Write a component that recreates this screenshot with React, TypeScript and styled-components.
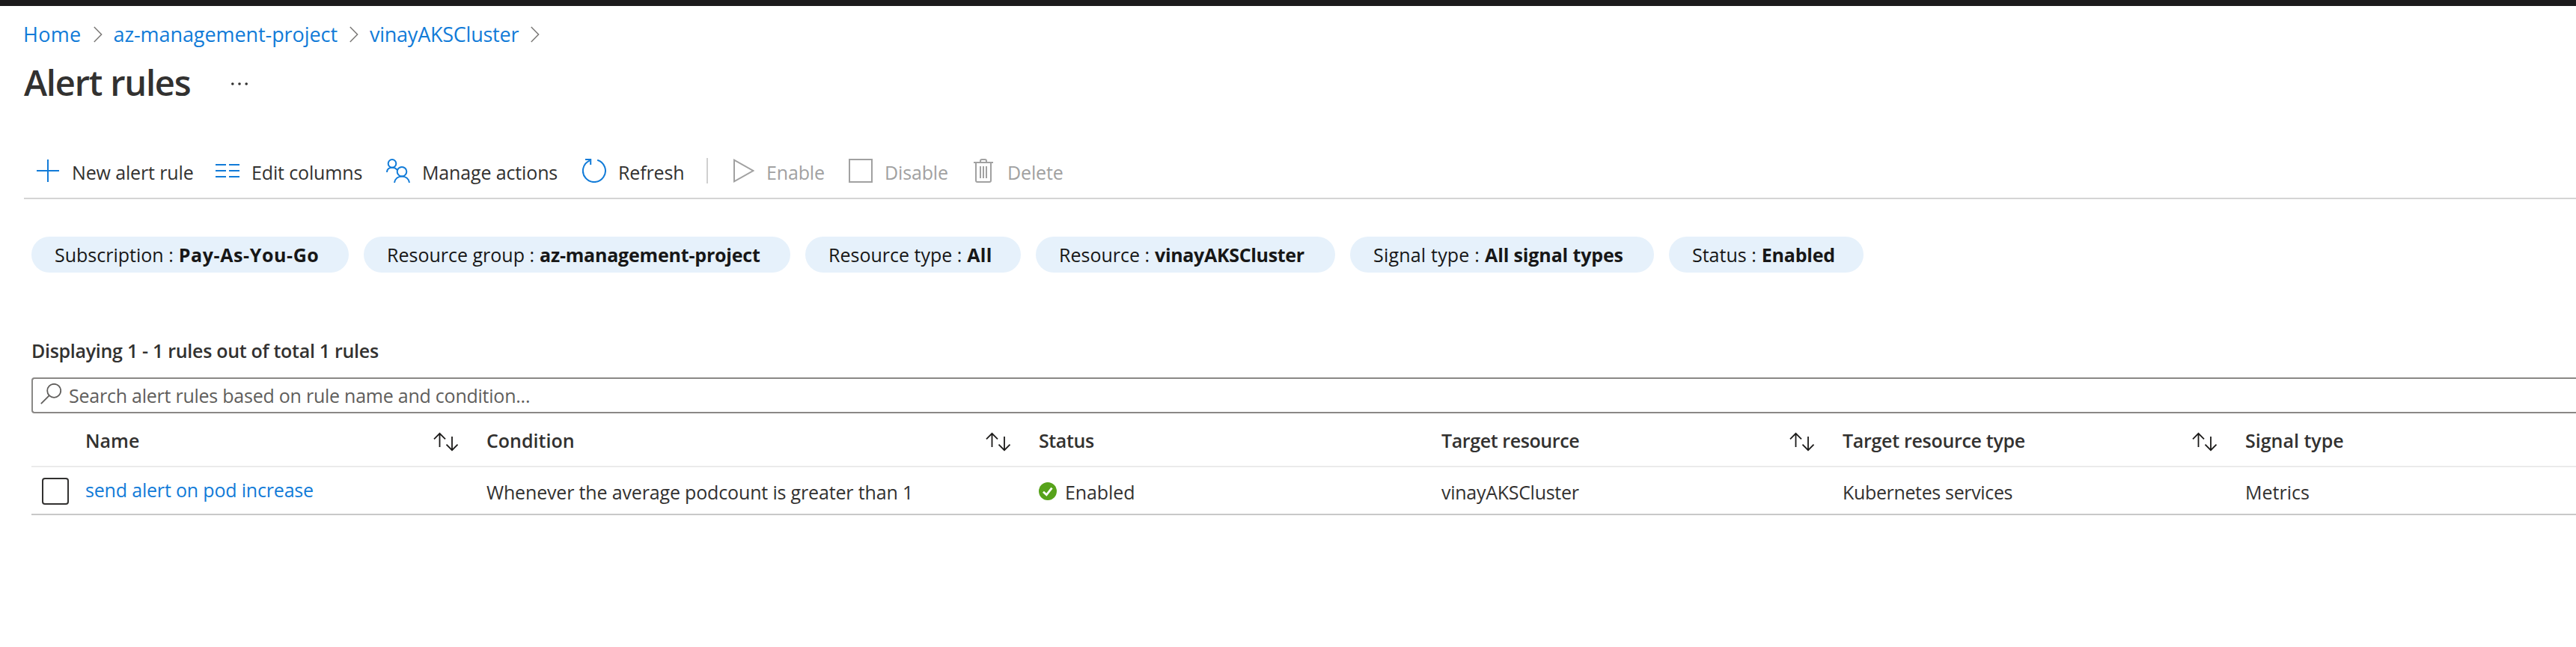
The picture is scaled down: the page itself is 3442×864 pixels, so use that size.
import React from "react";
import styled, { createGlobalStyle } from "styled-components";

const GlobalStyle = createGlobalStyle`
  *, *::before, *::after { box-sizing: border-box; }
  html, body { margin: 0; background: #ffffff; }
  body {
    font-family: "Open Sans", "Noto Sans", sans-serif;
    font-size: 25px;
    color: #323130;
    overflow: hidden;
  }
`;

const BLUE = "#117bd8";
const GREY = "#a1a1a1";

const Page = styled.div`
  display: flex;
  flex-direction: column;
  height: 864px;
  background: #ffffff;
`;

const TopStrip = styled.div`
  flex: none;
  height: 8px;
  background: #1c1b1c;
`;

const Breadcrumbs = styled.nav`
  display: flex;
  align-items: center;
  height: 37px;
  margin: 19px 0 0 31px;
  font-size: 27px;
`;

const Crumb = styled.a<{ $spacing: number }>`
  color: ${BLUE};
  white-space: pre;
  letter-spacing: ${(p) => p.$spacing}px;
`;

const CrumbChevron = styled.svg`
  flex: none;
  width: 12px;
  height: 22px;
  margin: 1px 15px 0 16px;
`;

const TitleRow = styled.header`
  display: flex;
  align-items: center;
  height: 60px;
  margin: 16px 0 0 32px;
`;

const Title = styled.h1`
  width: 276px;
  margin: 0;
  font-size: 47px;
  line-height: 60px;
  font-weight: 600;
  letter-spacing: -1.2px;
  white-space: pre;
`;

const MoreDots = styled.svg`
  width: 24px;
  height: 6px;
  margin-top: 4px;
`;

const Toolbar = styled.div`
  display: flex;
  align-items: center;
  height: 66px;
  margin: 60px 0 0 32px;
  padding: 0 0 8px 16px;
  border-bottom: 2px solid #d4d4d4;
`;

const Command = styled.button<{ $width: number; $disabled?: boolean }>`
  display: flex;
  align-items: center;
  flex: none;
  width: ${(p) => p.$width}px;
  padding: 0;
  border: 0;
  background: none;
  font: inherit;
  text-align: left;
  color: ${(p) => (p.$disabled ? GREY : "#323130")};
`;

const CommandIcon = styled.svg<{ $disabled?: boolean }>`
  flex: none;
  width: 32px;
  height: 32px;
  fill: none;
  stroke: ${(p) => (p.$disabled ? GREY : BLUE)};
  stroke-width: 2;
`;

const CommandLabel = styled.span`
  padding: 4px 0 0 16px;
  line-height: 28px;
  letter-spacing: -0.14px;
  white-space: pre;
`;

const Separator = styled.div`
  flex: none;
  width: 2px;
  height: 34px;
  margin-right: 30px;
  background: #d0d0d0;
`;

const Filters = styled.div`
  display: flex;
  gap: 20px;
  margin: 50px 0 0 42px;
`;

const Pill = styled.div<{ $width: number }>`
  display: flex;
  align-items: center;
  flex: none;
  width: ${(p) => p.$width}px;
  height: 48px;
  padding-left: 31px;
  border-radius: 24px;
  background: #e6f1fb;
  color: #171717;
  white-space: pre;
`;

const PillLabel = styled.span<{ $spacing?: number }>`
  letter-spacing: ${(p) => p.$spacing ?? 0}px;
`;

const PillValue = styled.span<{ $spacing: number }>`
  margin-left: 7px;
  font-weight: 700;
  letter-spacing: ${(p) => p.$spacing}px;
`;

const Summary = styled.div`
  height: 36px;
  margin: 86px 0 0 42px;
  line-height: 36px;
  font-weight: 600;
  letter-spacing: -0.29px;
`;

const SearchBox = styled.div`
  display: flex;
  align-items: center;
  height: 48px;
  margin: 18px 0 0 42px;
  padding-left: 10px;
  border: 2px solid #8a8886;
  border-right: 0;
  border-radius: 4px 0 0 4px;
`;

const SearchIcon = styled.svg`
  flex: none;
  width: 28px;
  height: 28px;
  margin-bottom: 4px;
`;

const SearchHint = styled.span`
  margin-left: 10px;
  color: #605e5c;
  letter-spacing: -0.24px;
  white-space: pre;
`;

const Grid = styled.div`
  margin-left: 42px;
`;

const GridRow = styled.div<{ $height: number; $line: string }>`
  display: grid;
  grid-template-columns: 72px 536px 738px 538px 536px 538px 1fr;
  align-items: center;
  height: ${(p) => p.$height}px;
  border-bottom: 2px solid ${(p) => p.$line};
`;

const HeadCell = styled.div`
  display: flex;
  align-items: center;
  justify-content: space-between;
  padding: 2px 37px 0 0;
  font-weight: 600;
`;

const HeadLabel = styled.span<{ $spacing?: number }>`
  white-space: pre;
  letter-spacing: ${(p) => p.$spacing ?? 0}px;
`;

const SortIcon = styled.svg`
  flex: none;
  width: 34px;
  height: 26px;
  margin-top: 4px;
`;

const Cell = styled.div<{ $spacing?: number }>`
  display: flex;
  align-items: center;
  padding-top: 3px;
  white-space: pre;
  letter-spacing: ${(p) => p.$spacing ?? 0}px;
`;

const RuleLink = styled.a`
  padding-bottom: 2px;
  color: ${BLUE};
  letter-spacing: -0.18px;
  white-space: pre;
`;

const Checkbox = styled.span`
  width: 36px;
  height: 36px;
  margin: 2px 0 0 14px;
  border: 2px solid #323130;
  border-radius: 4px;
`;

const StatusIcon = styled.svg`
  flex: none;
  width: 24px;
  height: 24px;
  margin: 0 11px 1px 0;
`;

type Filter = { label: string; value: string; width: number; ls?: number; vs: number };

const filters: Filter[] = [
  { label: "Subscription :", value: "Pay-As-You-Go", width: 424, ls: 0, vs: 0.6 },
  { label: "Resource group :", value: "az-management-project", width: 570, vs: -0.2 },
  { label: "Resource type :", value: "All", width: 288, vs: 0.3 },
  { label: "Resource :", value: "vinayAKSCluster", width: 400, vs: -0.33 },
  { label: "Signal type :", value: "All signal types", width: 406, ls: 0.2, vs: -0.13 },
  { label: "Status :", value: "Enabled", width: 260, vs: -0.2 },
];

const columns = [
  { title: "Name", sortable: true },
  { title: "Condition", sortable: true, spacing: 0 },
  { title: "Status", spacing: -0.4 },
  { title: "Target resource", sortable: true, spacing: -0.4 },
  { title: "Target resource type", sortable: true, spacing: -0.3 },
  { title: "Signal type", spacing: 0 },
];

const Chevron = () => (
  <CrumbChevron viewBox="0 0 12 22" fill="none" stroke="#7a7876" strokeWidth="1.5">
    <path d="M0.8 1 L10.6 11 L0.8 21" />
  </CrumbChevron>
);

const Sort = () => (
  <SortIcon viewBox="0 0 34 26" fill="none" stroke="#1b1a19" strokeWidth="1.8">
    <path d="M8.5 20 V2 M1 9.3 L8.5 1.8 L16 9.3" />
    <path d="M25 6 V24 M17.5 16.7 L25 24.2 L32.5 16.7" />
  </SortIcon>
);

export default function App() {
  return (
    <>
      <GlobalStyle />
      <Page>
        <TopStrip />
        <Breadcrumbs>
          <Crumb $spacing={0.3}>Home</Crumb>
          <Chevron />
          <Crumb $spacing={-0.08}>az-management-project</Crumb>
          <Chevron />
          <Crumb $spacing={-0.24}>vinayAKSCluster</Crumb>
          <Chevron />
        </Breadcrumbs>
        <TitleRow>
          <Title>Alert rules</Title>
          <MoreDots viewBox="0 0 24 6" fill="#323130">
            <circle cx="2.8" cy="3" r="1.8" />
            <circle cx="12" cy="3" r="1.8" />
            <circle cx="21.2" cy="3" r="1.8" />
          </MoreDots>
        </TitleRow>

        <Toolbar>
          <Command $width={240}>
            <CommandIcon viewBox="0 0 32 32">
              <path d="M16 1 V31 M1 16 H31" />
            </CommandIcon>
            <CommandLabel>New alert rule</CommandLabel>
          </Command>
          <Command $width={228}>
            <CommandIcon viewBox="0 0 32 32">
              <path d="M0 8 H14 M18 8 H32 M0 16 H14 M18 16 H32 M0 24 H14 M18 24 H32" />
            </CommandIcon>
            <CommandLabel>Edit columns</CommandLabel>
          </Command>
          <Command $width={262}>
            <CommandIcon viewBox="0 0 32 32">
              <circle cx="8" cy="6.4" r="5.3" />
              <path d="M1 18 C1 14 4 11.7 8 11.7 C11 11.7 13.5 13 14.8 15.2" />
              <circle cx="21" cy="17.2" r="6.3" />
              <path d="M11 32 C11.8 26.8 15.8 23.5 21 23.5 C26.2 23.5 30.2 26.8 31 32" />
            </CommandIcon>
            <CommandLabel>Manage actions</CommandLabel>
          </Command>
          <Command $width={166}>
            <CommandIcon viewBox="0 0 32 32">
              <path d="M20.2 1.7 A15 15 0 1 1 10 2.3" />
              <path d="M4 1 H11.2 V8" />
            </CommandIcon>
            <CommandLabel>Refresh</CommandLabel>
          </Command>
          <Separator />
          <Command $width={158} $disabled>
            <CommandIcon $disabled viewBox="0 0 32 32">
              <path d="M5 1.7 V30.3 L30.3 16 Z" />
            </CommandIcon>
            <CommandLabel>Enable</CommandLabel>
          </Command>
          <Command $width={164} $disabled>
            <CommandIcon $disabled viewBox="0 0 32 32">
              <rect x="1" y="1" width="30" height="30" />
            </CommandIcon>
            <CommandLabel>Disable</CommandLabel>
          </Command>
          <Command $width={160} $disabled>
            <CommandIcon $disabled viewBox="0 0 32 32">
              <path d="M3 5 H29 M12 5 V3 Q12 1 14 1 H18 Q20 1 20 3 V5" />
              <path d="M6 5 V29 Q6 31 8 31 H24 Q26 31 26 29 V5 M12 10 V26 M16 10 V26 M20 10 V26" />
            </CommandIcon>
            <CommandLabel>Delete</CommandLabel>
          </Command>
        </Toolbar>

        <Filters>
          {filters.map((f) => (
            <Pill key={f.label} $width={f.width}>
              <PillLabel $spacing={f.ls}>{f.label}</PillLabel>
              <PillValue $spacing={f.vs}>{f.value}</PillValue>
            </Pill>
          ))}
        </Filters>

        <Summary>Displaying 1 - 1 rules out of total 1 rules</Summary>
        <SearchBox>
          <SearchIcon viewBox="0 0 28 28" fill="none" stroke="#605e5c" strokeWidth="1.8">
            <circle cx="18.2" cy="9.8" r="9" />
            <path d="M11.8 16.2 L0.8 27.2" />
          </SearchIcon>
          <SearchHint>Search alert rules based on rule name and condition...</SearchHint>
        </SearchBox>

        <Grid>
          <GridRow $height={72} $line="#ebebeb">
            <span />
            {columns.map((c) => (
              <HeadCell key={c.title}>
                <HeadLabel $spacing={c.spacing}>{c.title}</HeadLabel>
                {c.sortable && <Sort />}
              </HeadCell>
            ))}
          </GridRow>
          <GridRow $height={64} $line="#c8c8c8">
            <Checkbox />
            <RuleLink>send alert on pod increase</RuleLink>
            <Cell $spacing={-0.16}>Whenever the average podcount is greater than 1</Cell>
            <Cell $spacing={-0.1}>
              <StatusIcon viewBox="0 0 24 24">
                <circle cx="12" cy="12" r="12" fill="#57a31b" />
                <path d="M6 12.8 L10.3 16.8 L17.5 7.6" fill="none" stroke="#ffffff" strokeWidth="2.8" />
              </StatusIcon>
              Enabled
            </Cell>
            <Cell $spacing={-0.28}>vinayAKSCluster</Cell>
            <Cell $spacing={-0.35}>Kubernetes services</Cell>
            <Cell>Metrics</Cell>
          </GridRow>
        </Grid>
      </Page>
    </>
  );
}
